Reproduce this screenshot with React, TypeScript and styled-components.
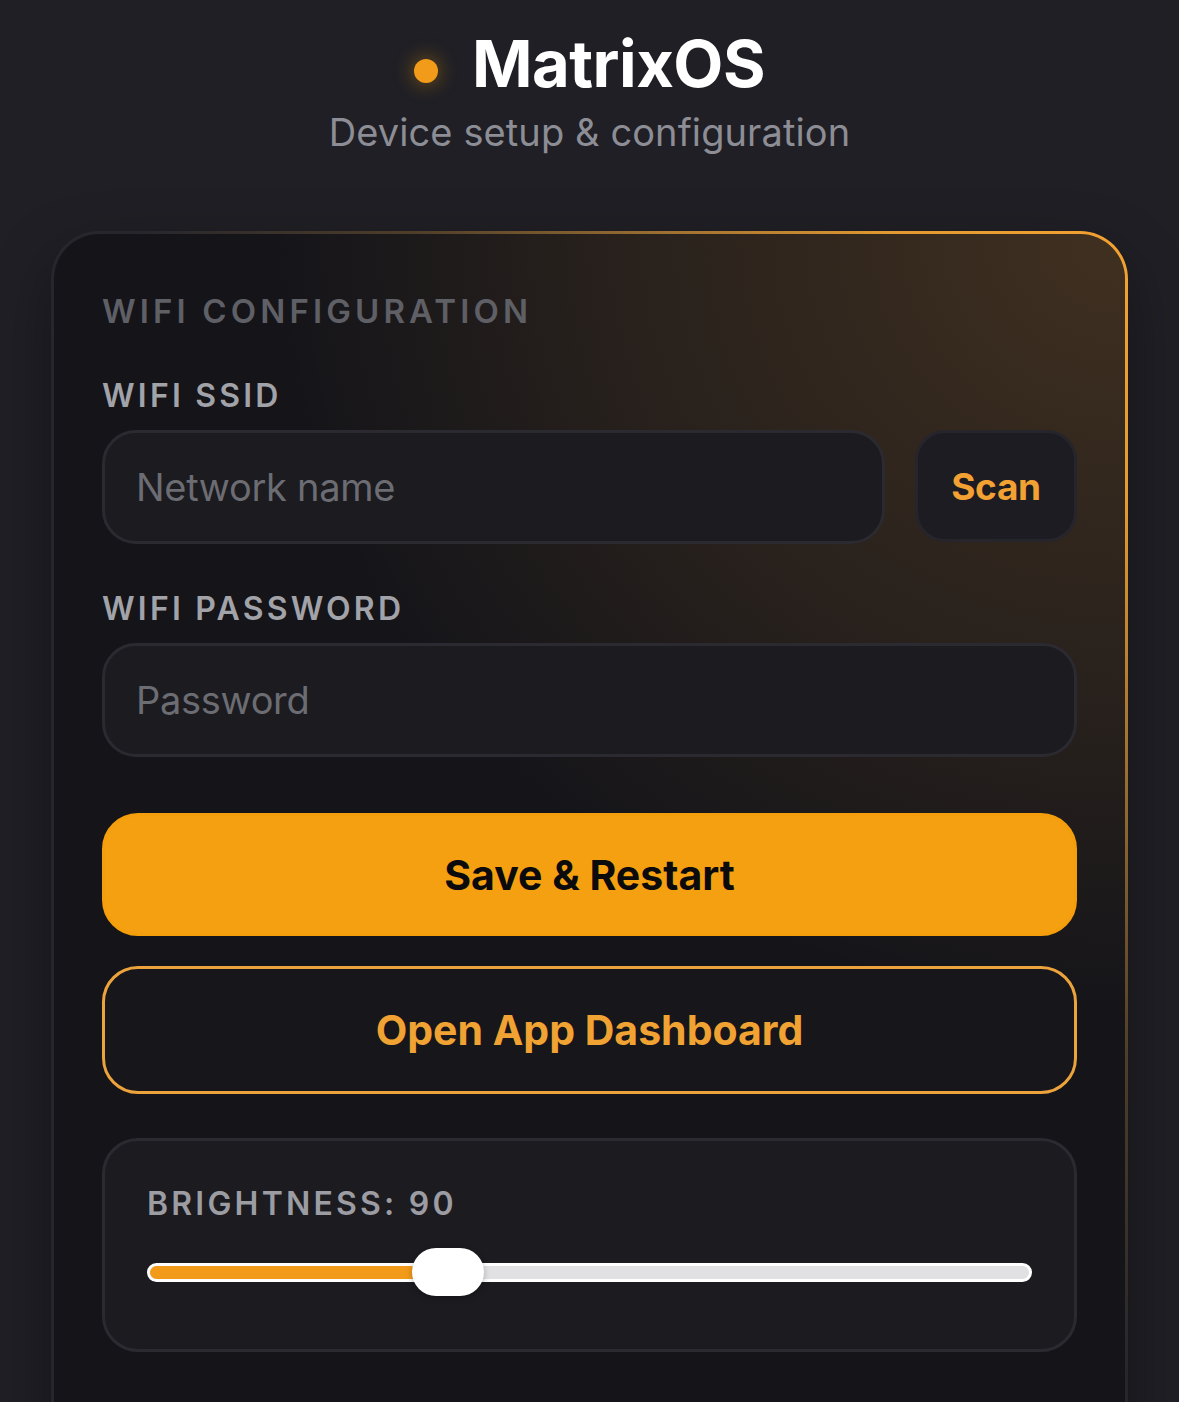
import React from 'react';
import styled, { createGlobalStyle } from 'styled-components';

const GlobalStyle = createGlobalStyle`
  html, body {
    margin: 0;
    padding: 0;
    background: #1f1f25;
  }
  body {
    font-family: Inter, "Noto Sans", "Liberation Sans", sans-serif;
    -webkit-font-smoothing: antialiased;
  }
`;

const accent = '#f59e0b';

const Page = styled.div`
  height: 100vh;
  overflow: hidden;
  box-sizing: border-box;
  padding: 25px 51px 0;
  display: flex;
  flex-direction: column;
`;

const Header = styled.header`
  display: flex;
  flex-direction: column;
  align-items: center;
`;

const Brand = styled.div`
  display: flex;
  align-items: center;
  gap: 34px;
`;

const Dot = styled.span`
  width: 24px;
  height: 24px;
  border-radius: 50%;
  background: #f29a1a;
  box-shadow: 0 0 18px 4px rgba(245, 158, 11, 0.28);
  margin-top: 14px;
`;

const Title = styled.h1`
  margin: 0;
  font-size: 65px;
  line-height: 78px;
  font-weight: 700;
  color: #ffffff;
  letter-spacing: -0.5px;
`;

const Subtitle = styled.p`
  margin: 6px 0 0;
  font-size: 38px;
  line-height: 46px;
  color: #8d8d95;
  letter-spacing: 0.1px;
`;

const Card = styled.section`
  margin-top: 76px;
  flex: 1;
  border: 3px solid transparent;
  border-radius: 48px;
  padding: 57px 48px 120px;
  display: flex;
  flex-direction: column;
  background:
    radial-gradient(ellipse 95% 75% at 100% 0%, rgba(240, 160, 60, 0.2), rgba(240, 160, 60, 0.08) 55%, transparent 85%) padding-box,
    linear-gradient(#141419, #141419) padding-box,
    linear-gradient(to bottom left, #f4a232 0%, #e39a30 11%, #9a6e32 22%, #4f3e29 33%, #26262c 46%) border-box;
  box-shadow: 0 24px 60px rgba(0, 0, 0, 0.35);
`;

const SectionTitle = styled.h2`
  margin: 0;
  font-size: 33px;
  line-height: 40px;
  font-weight: 600;
  letter-spacing: 0.125em;
  color: #5f5f66;
`;

const Label = styled.label<{ $top: number }>`
  display: block;
  margin-top: ${(p) => p.$top}px;
  font-size: 32px;
  line-height: 36px;
  font-weight: 600;
  letter-spacing: 0.1em;
  color: #a2a2a9;
`;

const FieldRow = styled.div`
  display: flex;
  gap: 30px;
  margin-top: 16px;
`;

const Input = styled.input`
  flex: 1;
  min-width: 0;
  height: 114px;
  box-sizing: border-box;
  padding: 0 31px;
  border-radius: 34px;
  border: 3px solid #2a2a30;
  background: #1b1b20;
  color: #e4e4e7;
  font-family: inherit;
  font-size: 38px;
  letter-spacing: -0.3px;
  outline: none;

  &::placeholder {
    color: #6c6c73;
  }
`;

const ScanButton = styled.button`
  flex: 0 0 162px;
  box-sizing: border-box;
  height: 112px;
  border-radius: 30px;
  border: 3px solid #25252b;
  background: #1c1c22;
  color: #f2a132;
  font-family: inherit;
  font-size: 37px;
  font-weight: 700;
  letter-spacing: -0.3px;
  cursor: pointer;
`;

const Button = styled.button<{ $variant: 'solid' | 'outline'; $top: number }>`
  margin-top: ${(p) => p.$top}px;
  width: 100%;
  height: ${(p) => (p.$variant === 'solid' ? 123 : 128)}px;
  border-radius: 36px;
  font-family: inherit;
  font-size: 41px;
  font-weight: 700;
  cursor: pointer;
  border: 3px solid ${(p) => (p.$variant === 'solid' ? accent : '#eda33c')};
  background: ${(p) => (p.$variant === 'solid' ? '#f5a010' : '#16161b')};
  color: ${(p) => (p.$variant === 'solid' ? '#0b0b0d' : '#f0a232')};
`;

const Panel = styled.div`
  margin-top: 44px;
  border: 3px solid #2a2a30;
  border-radius: 36px;
  background: #1b1b20;
  padding: 44px 42px 53px;
`;

const PanelLabel = styled.div`
  font-size: 32px;
  line-height: 38px;
  font-weight: 600;
  letter-spacing: 0.1em;
  color: #9c9ca3;
`;

const Slider = styled.div`
  position: relative;
  margin-top: 25px;
  height: 48px;
  display: flex;
  align-items: center;
`;

const Track = styled.div`
  position: relative;
  width: 100%;
  height: 19px;
  box-sizing: border-box;
  border: 3px solid #ffffff;
  border-radius: 10px;
  background: #e1e1e4;
  overflow: hidden;
`;

const Fill = styled.div`
  height: 100%;
  background: #f29a1a;
`;

const Thumb = styled.div`
  position: absolute;
  top: 0;
  width: 72px;
  height: 48px;
  margin-left: -36px;
  border-radius: 24px;
  background: #ffffff;
  box-shadow: 0 2px 6px rgba(0, 0, 0, 0.25);
`;

const BrightnessSlider = ({ value, min, max }: { value: number; min: number; max: number }) => {
  const f = (value - min) / (max - min);
  const pos = `calc(36px + (100% - 72px) * ${f})`;
  return (
    <Slider>
      <Track>
        <Fill style={{ width: pos }} />
      </Track>
      <Thumb style={{ left: pos }} />
    </Slider>
  );
};

export default function App() {
  const brightness = 90;

  return (
    <>
      <GlobalStyle />
      <Page>
        <Header>
          <Brand>
            <Dot />
            <Title>MatrixOS</Title>
          </Brand>
          <Subtitle>Device setup &amp; configuration</Subtitle>
        </Header>

        <Card>
          <SectionTitle>WIFI CONFIGURATION</SectionTitle>

          <Label $top={47} htmlFor="ssid">WIFI SSID</Label>
          <FieldRow>
            <Input id="ssid" placeholder="Network name" />
            <ScanButton>Scan</ScanButton>
          </FieldRow>

          <Label $top={47} htmlFor="pass">WIFI PASSWORD</Label>
          <FieldRow>
            <Input id="pass" type="password" placeholder="Password" />
          </FieldRow>

          <Button $variant="solid" $top={56}>Save &amp; Restart</Button>
          <Button $variant="outline" $top={30}>Open App Dashboard</Button>

          <Panel>
            <PanelLabel>BRIGHTNESS: {brightness}</PanelLabel>
            <BrightnessSlider value={brightness} min={10} max={255} />
          </Panel>
        </Card>
      </Page>
    </>
  );
}
